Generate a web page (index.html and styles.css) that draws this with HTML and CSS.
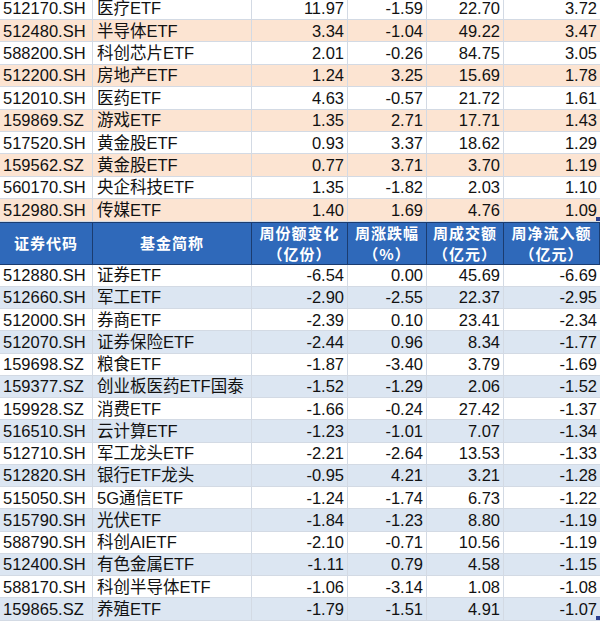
FILE: index.html
```html
<!DOCTYPE html>
<html lang="zh">
<head>
<meta charset="utf-8">
<link rel="stylesheet" href="styles.css">
</head>
<body>
<div class="sheet">
<div class="section top">
<div class="row"><span class="code">512170.SH</span><span class="name">医疗ETF</span><span>11.97</span><span>-1.59</span><span>22.70</span><span>3.72</span></div>
<div class="row or"><span class="code">512480.SH</span><span class="name">半导体ETF</span><span>3.34</span><span>-1.04</span><span>49.22</span><span>3.47</span></div>
<div class="row"><span class="code">588200.SH</span><span class="name">科创芯片ETF</span><span>2.01</span><span>-0.26</span><span>84.75</span><span>3.05</span></div>
<div class="row or"><span class="code">512200.SH</span><span class="name">房地产ETF</span><span>1.24</span><span>3.25</span><span>15.69</span><span>1.78</span></div>
<div class="row"><span class="code">512010.SH</span><span class="name">医药ETF</span><span>4.63</span><span>-0.57</span><span>21.72</span><span>1.61</span></div>
<div class="row or"><span class="code">159869.SZ</span><span class="name">游戏ETF</span><span>1.35</span><span>2.71</span><span>17.71</span><span>1.43</span></div>
<div class="row"><span class="code">517520.SH</span><span class="name">黄金股ETF</span><span>0.93</span><span>3.37</span><span>18.62</span><span>1.29</span></div>
<div class="row or"><span class="code">159562.SZ</span><span class="name">黄金股ETF</span><span>0.77</span><span>3.71</span><span>3.70</span><span>1.19</span></div>
<div class="row"><span class="code">560170.SH</span><span class="name">央企科技ETF</span><span>1.35</span><span>-1.82</span><span>2.03</span><span>1.10</span></div>
<div class="row or"><span class="code">512980.SH</span><span class="name">传媒ETF</span><span>1.40</span><span>1.69</span><span>4.76</span><span class="sel">1.09<i class="handle"></i></span></div>
</div>
<div class="row head">
<span>证券代码</span><span>基金简称</span><span>周份额变化<br>（亿份）</span><span>周涨跌幅<br>（%）</span><span>周成交额<br>（亿元）</span><span>周净流入额<br>（亿元）</span>
</div>
<div class="section bottom">
<div class="row"><span class="code">512880.SH</span><span class="name">证券ETF</span><span>-6.54</span><span>0.00</span><span>45.69</span><span>-6.69</span></div>
<div class="row bl"><span class="code">512660.SH</span><span class="name">军工ETF</span><span>-2.90</span><span>-2.55</span><span>22.37</span><span>-2.95</span></div>
<div class="row"><span class="code">512000.SH</span><span class="name">券商ETF</span><span>-2.39</span><span>0.10</span><span>23.41</span><span>-2.34</span></div>
<div class="row bl"><span class="code">512070.SH</span><span class="name">证券保险ETF</span><span>-2.44</span><span>0.96</span><span>8.34</span><span>-1.77</span></div>
<div class="row"><span class="code">159698.SZ</span><span class="name">粮食ETF</span><span>-1.87</span><span>-3.40</span><span>3.79</span><span>-1.69</span></div>
<div class="row bl"><span class="code">159377.SZ</span><span class="name">创业板医药ETF国泰</span><span>-1.52</span><span>-1.29</span><span>2.06</span><span>-1.52</span></div>
<div class="row"><span class="code">159928.SZ</span><span class="name">消费ETF</span><span>-1.66</span><span>-0.24</span><span>27.42</span><span>-1.37</span></div>
<div class="row bl"><span class="code">516510.SH</span><span class="name">云计算ETF</span><span>-1.23</span><span>-1.01</span><span>7.07</span><span>-1.34</span></div>
<div class="row"><span class="code">512710.SH</span><span class="name">军工龙头ETF</span><span>-2.21</span><span>-2.64</span><span>13.53</span><span>-1.33</span></div>
<div class="row bl"><span class="code">512820.SH</span><span class="name">银行ETF龙头</span><span>-0.95</span><span>4.21</span><span>3.21</span><span>-1.28</span></div>
<div class="row"><span class="code">515050.SH</span><span class="name">5G通信ETF</span><span>-1.24</span><span>-1.74</span><span>6.73</span><span>-1.22</span></div>
<div class="row bl"><span class="code">515790.SH</span><span class="name">光伏ETF</span><span>-1.84</span><span>-1.23</span><span>8.80</span><span>-1.19</span></div>
<div class="row"><span class="code">588790.SH</span><span class="name">科创AIETF</span><span>-2.10</span><span>-0.71</span><span>10.56</span><span>-1.19</span></div>
<div class="row bl"><span class="code">512400.SH</span><span class="name">有色金属ETF</span><span>-1.11</span><span>0.79</span><span>4.58</span><span>-1.15</span></div>
<div class="row"><span class="code">588170.SH</span><span class="name">科创半导体ETF</span><span>-1.06</span><span>-3.14</span><span>1.08</span><span>-1.08</span></div>
<div class="row bl"><span class="code">159865.SZ</span><span class="name">养殖ETF</span><span>-1.79</span><span>-1.51</span><span>4.91</span><span class="sel">-1.07<i class="handle"></i></span></div>
</div>
</div>
</body>
</html>
```

FILE: styles.css
```css
html, body {
  margin: 0;
  padding: 0;
  background: #ffffff;
}
body {
  width: 600px;
  height: 621px;
  overflow: hidden;
}
.sheet {
  margin-top: -2.4px;
  width: 600px;
  font-family: "Liberation Sans", Arial, "Noto Sans CJK SC", sans-serif;
  font-size: 16.5px;
  color: #111111;
}
.row {
  display: grid;
  grid-template-columns: 93px 159px 96px 79px 77px 96px;
  box-sizing: border-box;
}
.row > span {
  display: flex;
  align-items: center;
  justify-content: flex-end;
  padding: 0 3px 0 3px;
  white-space: nowrap;
  overflow: hidden;
  border-right: 1px solid #d3dae4;
  border-bottom: 1px solid #d3dae4;
  box-sizing: border-box;
  line-height: 18px;
}
.row > span:last-child {
  border-right: none;
}
.row > span.code {
  justify-content: flex-start;
  padding-left: 3px;
}
.row > span.name {
  justify-content: flex-start;
  padding-left: 4px;
}
.top .row { height: 22.4px; }
.top .row.or > span { background: #fce4d2; }
.bottom .row { height: 22.25px; }
.bottom .row.bl > span { background: #dce6f2; }
.row.head {
  height: 43px;
  background: #2f69ba;
  border-top: 1px solid #1b3c70;
  border-bottom: 1px solid #1b3c70;
}
.row.head > span {
  justify-content: center;
  text-align: center;
  color: #ffffff;
  font-family: "Noto Sans CJK SC", sans-serif;
  font-weight: bold;
  font-size: 15px;
  letter-spacing: 1px;
  line-height: 21.5px;
  padding: 0;
  border-right: 1px solid #1b3c70;
  border-bottom: none;
}
.row > span.sel {
  position: relative;
}
.handle {
  position: absolute;
  right: 0;
  bottom: 0;
  width: 4px;
  height: 4px;
  background: #2a3f8f;
}
```
